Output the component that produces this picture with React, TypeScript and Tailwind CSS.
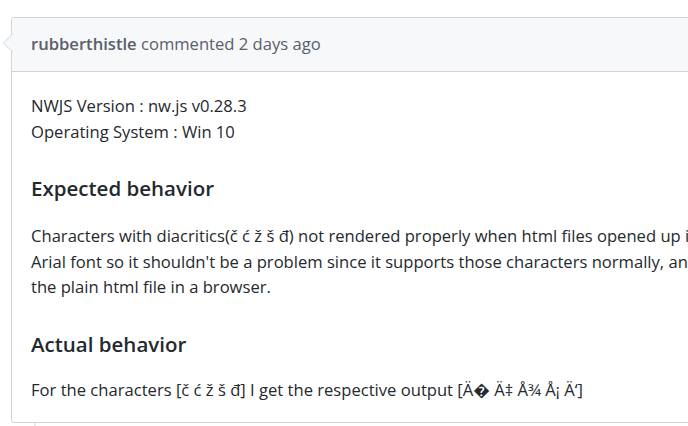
import React from "react";

export default function App() {
  return (
    <div
      className="relative w-[688px] h-[426px] overflow-hidden bg-white text-[#24292e]"
      style={{ fontFamily: '"Open Sans", "Noto Sans", sans-serif' }}
    >
      <div className="pt-[17px] pl-[11px]">
        <div className="relative w-[760px] border border-[#d1d5da] rounded-[3px] bg-white">
          <svg
            className="absolute left-[-10px] top-[15px]"
            width="11"
            height="20"
            viewBox="0 0 11 20"
          >
            <path d="M11 0.5 L1.5 10 L11 19.5 Z" fill="#f6f8fa" />
            <path d="M11 0.5 L1.5 10 L11 19.5" fill="none" stroke="#d1d5da" strokeWidth="1" />
          </svg>
          <div className="h-[54px] flex items-center pl-[19px] bg-[#f6f8fa] border-b border-[#d1d5da] rounded-t-[3px] text-[16.6px] text-[#586069] whitespace-nowrap">
            <span className="font-semibold">rubberthistle</span>
            <span>&nbsp;commented 2 days ago</span>
          </div>
          <div className="pl-[19px] pt-[21px] pb-[20px] text-[16.6px] leading-[25.5px] whitespace-nowrap">
            <p>
              NWJS Version : nw.js v0.28.3
              <br />
              Operating System : Win 10
            </p>
            <h3 className="mt-[29px] mb-[20px] text-[20.5px] leading-[30px] font-semibold">
              Expected behavior
            </h3>
            <p>
              Characters with diacritics(č ć ž š đ) not rendered properly when html files opened up in NWJS. I'm using
              <br />
              Arial font so it shouldn't be a problem since it supports those characters normally, and they are displayed properly when I open
              <br />
              the plain html file in a browser.
            </p>
            <h3 className="mt-[29px] mb-[18px] text-[20.5px] leading-[30px] font-semibold">
              Actual behavior
            </h3>
            <p>For the characters [č ć ž š đ] I get the respective output [Ä� Ä‡ Å¾ Å¡ Ä‘]</p>
          </div>
        </div>
        <div className="ml-[23px] w-[2px] h-[10px] bg-[#e8eaed]" />
      </div>
    </div>
  );
}
